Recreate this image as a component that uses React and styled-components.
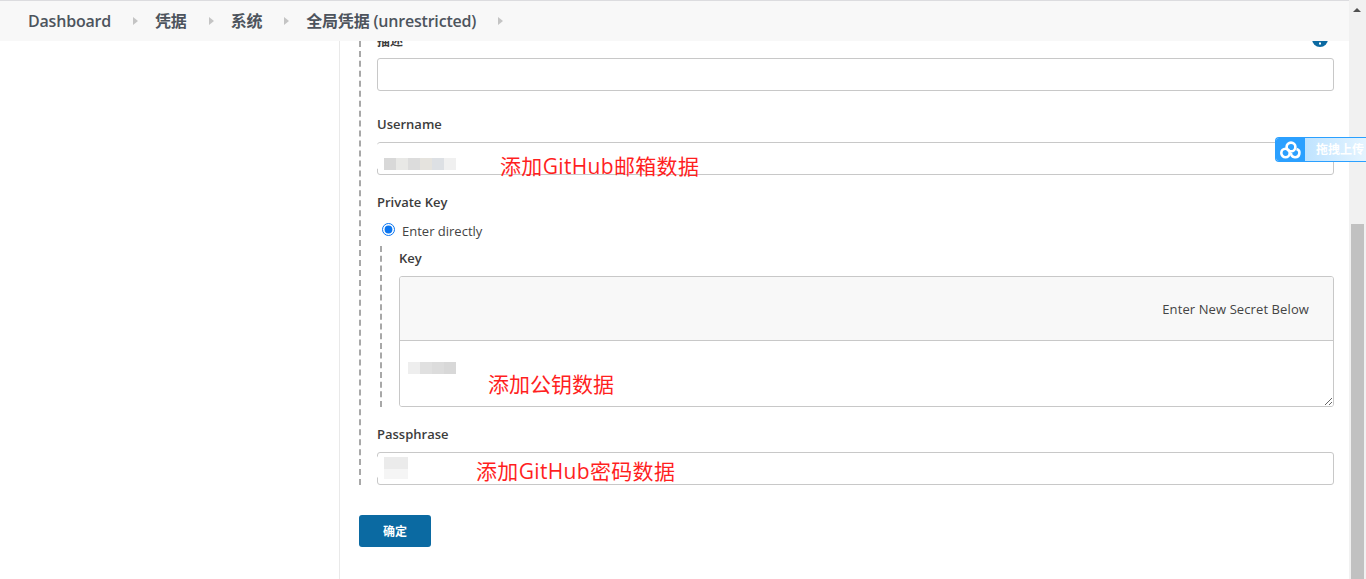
import React from "react";
import styled, { createGlobalStyle } from "styled-components";

const CJK = `"Open Sans", "Noto Sans CJK SC", sans-serif`;

const crumbs = ["Dashboard", "凭据", "系统", "全局凭据 (unrestricted)"];

const App = () => {
  return (
    <Page>
      <GlobalStyle />
      <Viewport>
        <Header>
          {crumbs.map((crumb) => (
            <Crumb key={crumb}>
              <CrumbLink>{crumb}</CrumbLink>
              <CrumbArrow />
            </Crumb>
          ))}
        </Header>
        <Body>
          <Side />
          <Main>
            <Form>
              <Field>
                <LabelRow>
                  <Label>描述</Label>
                  <InfoIcon viewBox="0 0 16 16">
                    <circle cx="8" cy="8" r="8" fill="#0b6aa2" />
                    <rect x="7" y="11.5" width="2" height="2" fill="#fff" />
                    <rect x="7" y="6" width="2" height="4" fill="#fff" />
                  </InfoIcon>
                </LabelRow>
                <TextInput />
              </Field>

              <Field>
                <LabelRow>
                  <Label>Username</Label>
                </LabelRow>
                <InputWrap>
                  <TextInput />
                  <Smudge $left={-5} $top={1} $width={83} $height={27}>
                    <Pixels $left={12} $top={15}>
                      {["#d8d8d8", "#e8e8e6", "#dcdcdc", "#e5e3de", "#dde0e4", "#f0f0f0"].map((c) => (
                        <Pixel key={c} $color={c} $height={12} />
                      ))}
                    </Pixels>
                  </Smudge>
                  <Note $left={123} $top={10} $spread={0.33}>添加GitHub邮箱数据</Note>
                </InputWrap>
              </Field>

              <Field $gap={18}>
                <LabelRow>
                  <Label>Private Key</Label>
                </LabelRow>
                <RadioRow>
                  <Radio type="radio" checked readOnly />
                  <RadioLabel>Enter directly</RadioLabel>
                </RadioRow>
                <Nested>
                  <LabelRow>
                    <Label>Key</Label>
                  </LabelRow>
                  <SecretBox>
                    <SecretHead>Enter New Secret Below</SecretHead>
                    <SecretBody>
                      <SecretArea />
                      <Smudge $left={-3} $top={6} $width={63} $height={26}>
                        <Pixels $left={11} $top={15}>
                          {["#eeeeee", "#e0e0e0", "#dcdcdc", "#d8d8d8"].map((c) => (
                            <Pixel key={c} $color={c} $height={12} />
                          ))}
                        </Pixels>
                      </Smudge>
                      <Note $left={88} $top={29}>添加公钥数据</Note>
                    </SecretBody>
                  </SecretBox>
                </Nested>
              </Field>

              <Field $gap={18}>
                <LabelRow>
                  <Label>Passphrase</Label>
                </LabelRow>
                <InputWrap>
                  <TextInput />
                  <Smudge $left={-2} $top={1} $width={48} $height={28}>
                    <Pixels $left={9} $top={4}>
                      <Pixel $color="#ebebeb" $width={24} $height={12} />
                    </Pixels>
                    <Pixels $left={9} $top={16}>
                      <Pixel $color="#f5f5f5" $width={24} $height={10} />
                    </Pixels>
                  </Smudge>
                  <Note $left={99} $top={5} $spread={0.33}>添加GitHub密码数据</Note>
                </InputWrap>
              </Field>
            </Form>
            <Submit>确定</Submit>
          </Main>
        </Body>
      </Viewport>

      <Scrollbar>
        <ScrollArrow />
        <ScrollThumb />
      </Scrollbar>

      <UploadTab>
        <UploadIcon>
          <svg width="22" height="18" viewBox="0 0 22 18" fill="none" stroke="#fff" strokeWidth="2.6">
            <circle cx="11" cy="6" r="4.4" />
            <circle cx="5.5" cy="12" r="4.2" />
            <path d="M11 12 a4.2 4.2 0 1 0 5.5-4" />
          </svg>
        </UploadIcon>
        <UploadText>拖拽上传</UploadText>
      </UploadTab>
    </Page>
  );
};

export default App;

const GlobalStyle = createGlobalStyle`
  html, body {
    margin: 0;
    height: 100%;
    overflow: hidden;
    background: #fff;
  }
  * {
    box-sizing: border-box;
  }
`;

const Page = styled.div`
  position: relative;
  display: flex;
  height: 579px;
  overflow: hidden;
  font-family: ${CJK};
  color: #333;
`;

const Viewport = styled.div`
  flex: 1;
  min-width: 0;
  display: flex;
  flex-direction: column;
`;

const Header = styled.div`
  position: relative;
  z-index: 2;
  height: 41px;
  flex: none;
  display: flex;
  align-items: center;
  padding-left: 28px;
  background: #f8f8f8;
  border-top: 1px solid #dcdcdf;
`;

const Crumb = styled.div`
  display: flex;
  align-items: center;
`;

const CrumbLink = styled.span`
  font-size: 16px;
  font-weight: 600;
  line-height: 20px;
  letter-spacing: -0.2px;
  color: #4d545d;
  white-space: nowrap;
`;

const CrumbArrow = styled.span`
  width: 0;
  height: 0;
  margin: 0 17px 0 22px;
  border-left: 5px solid #c4c4c4;
  border-top: 4px solid transparent;
  border-bottom: 4px solid transparent;
`;

const Body = styled.div`
  flex: 1;
  display: flex;
  min-height: 0;
`;

const Side = styled.div`
  width: 340px;
  flex: none;
  border-right: 1px solid #e9e9e9;
`;

const Main = styled.div`
  flex: 1;
  min-width: 0;
  padding: 0 15px 0 19px;
`;

const Form = styled.div`
  margin-top: -10px;
  padding-left: 16px;
  border-left: 2px dashed #a8a8a8;
`;

const Field = styled.div`
  margin-top: ${(p) => p.$gap ?? 24}px;
  &:first-child {
    margin-top: 0;
  }
`;

const LabelRow = styled.div`
  display: flex;
  justify-content: space-between;
  align-items: flex-start;
  height: 18px;
  margin-bottom: 9px;
`;

const Label = styled.label`
  font-size: 13px;
  font-weight: 600;
  line-height: 18px;
  color: #3c3c3c;
`;

const InfoIcon = styled.svg`
  width: 16px;
  height: 16px;
  margin-right: 6px;
`;

const InputWrap = styled.div`
  position: relative;
`;

const TextInput = styled.input`
  display: block;
  width: 100%;
  height: 33px;
  border: 1px solid #c8c8c8;
  border-radius: 3px;
  background: #fff;
  outline: none;
`;

const Smudge = styled.div`
  position: absolute;
  left: ${(p) => p.$left}px;
  top: ${(p) => p.$top}px;
  width: ${(p) => p.$width}px;
  height: ${(p) => p.$height}px;
  background: #fff;
  border-radius: 10px;
`;

const Pixels = styled.div`
  position: absolute;
  left: ${(p) => p.$left}px;
  top: ${(p) => p.$top}px;
  display: flex;
`;

const Pixel = styled.span`
  width: ${(p) => p.$width ?? 12}px;
  height: ${(p) => p.$height}px;
  background: ${(p) => p.$color};
`;

const Note = styled.span`
  position: absolute;
  left: ${(p) => p.$left}px;
  top: ${(p) => p.$top}px;
  font-family: ${CJK};
  font-size: 21px;
  line-height: 28px;
  letter-spacing: ${(p) => p.$spread ?? 0}px;
  color: #ff1f1f;
  white-space: nowrap;
`;

const RadioRow = styled.div`
  display: flex;
  align-items: center;
  height: 18px;
  padding-left: 5px;
`;

const Radio = styled.input`
  width: 13px;
  height: 13px;
  margin: 0 7px 0 0;
  accent-color: #0a75f0;
`;

const RadioLabel = styled.span`
  position: relative;
  top: 2px;
  font-size: 13px;
  line-height: 18px;
  color: #444;
`;

const Nested = styled.div`
  margin-top: 8px;
  margin-left: 3px;
  padding: 3px 0 0 17px;
  border-left: 2px dashed #a8a8a8;
`;

const SecretBox = styled.div`
  border: 1px solid #c8c8c8;
  border-radius: 3px;
  overflow: hidden;
`;

const SecretHead = styled.div`
  height: 64px;
  display: flex;
  align-items: center;
  justify-content: flex-end;
  padding-right: 24px;
  font-size: 13px;
  letter-spacing: 0.1px;
  color: #444;
  background: #f8f8f8;
  border-bottom: 1px solid #c8c8c8;
`;

const SecretBody = styled.div`
  position: relative;
  height: 65px;
`;

const SecretArea = styled.textarea`
  display: block;
  width: 100%;
  height: 100%;
  border: none;
  outline: none;
  resize: vertical;
`;

const Submit = styled.button`
  display: block;
  width: 72px;
  height: 32px;
  margin-top: 30px;
  border: none;
  border-radius: 3px;
  background: #0b6aa2;
  color: #fff;
  font-family: ${CJK};
  font-size: 12px;
  font-weight: 700;
`;

const Scrollbar = styled.div`
  position: relative;
  width: 17px;
  flex: none;
  display: flex;
  flex-direction: column;
  justify-content: flex-end;
  background: #f1f1f1;
`;

const ScrollArrow = styled.span`
  position: absolute;
  top: 8px;
  left: 4px;
  border-left: 4px solid transparent;
  border-right: 4px solid transparent;
  border-bottom: 4px solid #505050;
`;

const ScrollThumb = styled.div`
  height: 355px;
  margin: 0 2px;
  background: #c1c1c1;
`;

const UploadTab = styled.div`
  position: absolute;
  top: 137px;
  right: 0;
  width: 91px;
  height: 25px;
  display: flex;
  border: 1px solid #2ba0ff;
  border-right: none;
  border-radius: 4px 0 0 4px;
  overflow: hidden;
`;

const UploadIcon = styled.div`
  width: 29px;
  display: flex;
  align-items: center;
  justify-content: center;
  background: #2ba0ff;
`;

const UploadText = styled.div`
  flex: 1;
  padding-left: 11px;
  font-size: 12px;
  line-height: 23px;
  font-weight: 700;
  color: #fff;
  white-space: nowrap;
  background: linear-gradient(90deg, #bfe3ff, #e4f4ff);
`;
